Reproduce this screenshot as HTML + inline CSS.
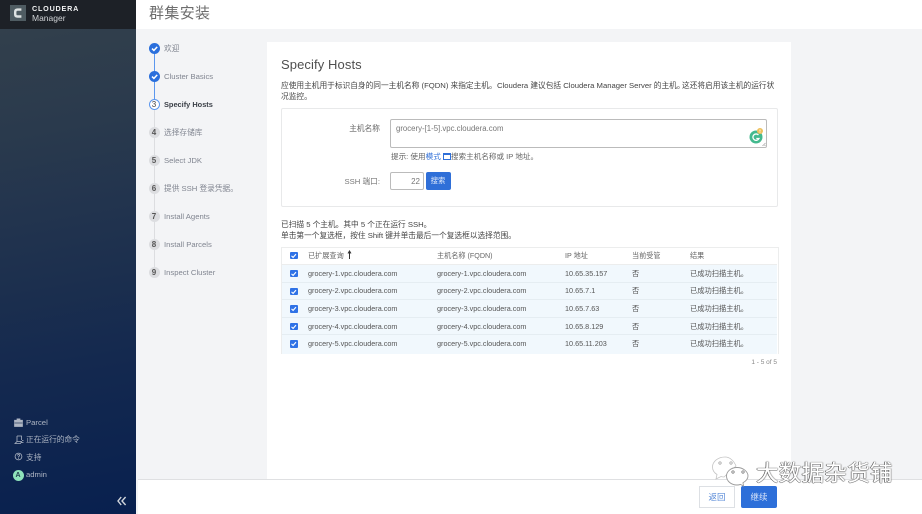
<!DOCTYPE html>
<html lang="zh"><head><meta charset="utf-8"><title>群集安装</title>
<style>
html,body{margin:0;padding:0;width:922px;height:514px;overflow:hidden;background:#f3f4f6}
body{font-family:"Liberation Sans","Noto Sans CJK SC",sans-serif;font-size:7.7px;color:#555;position:relative}
#w{position:absolute;left:0;top:0;width:922px;height:514px;filter:blur(.25px)}
.a,.t{position:absolute;white-space:nowrap}
.t{line-height:12px;height:12px}
.c{position:absolute;left:148.5px;width:11px;height:11px;border-radius:50%;background:#dcdde0;color:#555;font-size:8px;font-weight:bold;line-height:11px;text-align:center}
.s{left:164px;color:#808590;font-size:7.7px}
.side{left:26px;color:#aeb6c4;font-size:7.7px}
.row{position:absolute;left:282px;width:495px;background:#f1f8fd;border-bottom:1px solid #e5edf2;box-sizing:border-box}
.cb{position:absolute;left:290px;width:7.5px;height:7.5px;background:#2f72e6;border-radius:1px}
.cb svg{position:absolute;left:0;top:0}
.g{color:#555;font-size:7.25px}
.h{color:#666;font-size:7.15px}
</style></head><body><div id="w">

<div class="a" style="left:0;top:0;width:136px;height:514px;background:linear-gradient(170deg,#34414c 0%,#2a3a4d 25%,#14294f 70%,#08204f 100%)"></div>
<div class="a" style="left:0;top:0;width:136px;height:29px;background:#1d2127"></div>
<div class="a" style="left:10px;top:5px;width:16px;height:16px;background:#4f5c62"></div>
<svg class="a" style="left:10px;top:5px" width="16" height="16"><path d="M11.4 4.600H7.600Q5.200 4.600 5.200 7V9.200Q5.200 11.500 7.600 11.500H11.400" fill="none" stroke="#dfe3e3" stroke-width="2.400"/></svg>
<span class="t" style="left:32px;top:3px;color:#f1f2f3;font-weight:bold;font-size:7.200px;letter-spacing:.8px">CLOUDERA</span>
<span class="t" style="left:32px;top:12px;color:#d0d3d6;font-size:8.500px">Manager</span>

<svg class="a" style="left:14px;top:418px" width="9" height="9"><path d="M3 2V.8H6V2M.5 2.200H8.500V8.500H.5Z M.5 5H8.500" fill="#aeb6c4" stroke="#aeb6c4" stroke-width=".7"/><path d="M.5 5H8.500" stroke="#23375a" stroke-width=".7"/></svg>
<span class="t side" style="top:416.500px">Parcel</span>
<svg class="a" style="left:14px;top:435px" width="10" height="10" fill="none" stroke="#aeb6c4" stroke-width=".8"><path d="M3 1H7.500V5M3 1V6.500L1 8.500H6.500L7.500 6.500H3M7 7.500H9.500M8 5.500H9.500"/></svg>
<span class="t side" style="top:433.500px">正在运行的命令</span>
<svg class="a" style="left:14px;top:452px" width="9" height="9" fill="none" stroke="#aeb6c4" stroke-width=".8"><circle cx="4.500" cy="4.500" r="3.400"/><path d="M3.300 3.500Q3.500 2.500 4.600 2.500Q5.800 2.600 5.600 3.600Q5.200 4.400 4.500 4.800V5.500M4.500 6V6.800"/></svg>
<span class="t side" style="top:451.500px">支持</span>
<div class="a" style="left:12.500px;top:469.500px;width:11px;height:11px;border-radius:50%;background:#8fe3bb;color:#23404f;font-size:7px;font-weight:bold;line-height:11px;text-align:center">A</div>
<span class="t side" style="top:468.500px">admin</span>
<svg class="a" style="left:117px;top:496px" width="10" height="10" fill="none" stroke="#d2d6dc" stroke-width="1.400"><path d="M4.200 1 1 5 4.200 9M8.600 1 5 5 8.600 9"/></svg>

<div class="a" style="left:136px;top:0;width:786px;height:29px;background:#fff"></div>
<span class="t" style="left:149px;top:1.500px;font-size:15px;line-height:24px;height:24px;color:#6e6e6e;letter-spacing:.35px">群集安装</span>

<div class="a" style="left:154px;top:52px;width:1px;height:50px;background:#5b97ee"></div>
<div class="a" style="left:154px;top:108px;width:1px;height:160px;background:#dcdde0"></div>

<div class="c" style="top:42.500px;background:#2a6fdc"></div>
<svg class="a" style="left:148.500px;top:42.500px" width="11" height="11"><path d="M3 5.600 4.900 7.400 8.200 3.900" fill="none" stroke="#fff" stroke-width="1.500"/></svg>
<span class="t s" style="top:42.500px">欢迎</span>
<div class="c" style="top:70.500px;background:#2a6fdc"></div>
<svg class="a" style="left:148.500px;top:70.500px" width="11" height="11"><path d="M3 5.600 4.900 7.400 8.200 3.900" fill="none" stroke="#fff" stroke-width="1.500"/></svg>
<span class="t s" style="top:70.500px">Cluster Basics</span>
<div class="c" style="top:98.500px;box-sizing:border-box;background:#fff;border:1px solid #5b97ee;line-height:9px;font-weight:normal;color:#444">3</div>
<span class="t s" style="top:98.500px;color:#3a3f47;font-weight:bold;font-size:7.400px">Specify Hosts</span>
<div class="c" style="top:126.500px">4</div><span class="t s" style="top:126.500px">选择存储库</span>
<div class="c" style="top:154.500px">5</div><span class="t s" style="top:154.500px">Select JDK</span>
<div class="c" style="top:182.500px">6</div><span class="t s" style="top:182.500px">提供 SSH 登录凭据。</span>
<div class="c" style="top:210.500px">7</div><span class="t s" style="top:210.500px">Install Agents</span>
<div class="c" style="top:238.500px">8</div><span class="t s" style="top:238.500px">Install Parcels</span>
<div class="c" style="top:266.500px">9</div><span class="t s" style="top:266.500px">Inspect Cluster</span>

<div class="a" style="left:267px;top:42px;width:524px;height:437px;background:#fff"></div>
<span class="t" style="left:281px;top:56px;font-size:13px;line-height:18px;height:18px;color:#4f4f4f;letter-spacing:.1px">Specify Hosts</span>
<span class="t" style="left:281px;top:79.500px;color:#444">应使用主机用于标识自身的同一主机名称 (FQDN) 来指定主机。</span>
<span class="t" style="left:497px;top:79.500px;color:#444">Cloudera 建议包括 Cloudera Manager Server 的主机。</span>
<span class="t" style="left:682px;top:79.500px;color:#444">这还将启用该主机的运行状</span>
<span class="t" style="left:281px;top:91px;color:#444">况监控。</span>

<div class="a" style="left:281px;top:108px;width:495px;height:97px;border:1px solid #e8e9ea;border-radius:2px"></div>
<span class="t" style="left:340px;width:40px;text-align:right;top:122.500px;color:#666">主机名称</span>
<div class="a" style="left:390px;top:119px;width:375px;height:27px;border:1px solid #bbb;border-radius:2px;background:#fff"></div>
<span class="t" style="left:396px;top:122.500px;color:#777;font-size:7.800px">grocery-[1-5].vpc.cloudera.com</span>
<svg class="a" style="left:748px;top:126px" width="18" height="20"><circle cx="8" cy="11" r="6.500" fill="#43b98e"/><path d="M10.500 9A3.200 3.200 0 1 0 11 12.500H8.300" fill="none" stroke="#fff" stroke-width="1.300"/><circle cx="12" cy="5" r="3" fill="#edc05c"/><path d="M12 3.500V5.500M12 6V6.600" stroke="#fff" stroke-width=".8"/><path d="M17.500 17 14 20.500M17.500 19 16 20.500" stroke="#999" stroke-width=".6"/></svg>
<span class="t" style="left:391px;top:151px;color:#666;font-size:7.600px">提示: 使用<span style="color:#2f6fd8">模式</span> <span style="display:inline-block;width:6px;height:4px;border:1px solid #2f6fd8;border-top-width:2px;vertical-align:-1px"></span>搜索主机名称或 IP 地址。</span>
<span class="t" style="left:330px;width:50px;text-align:right;top:175.500px;color:#777">SSH 端口:</span>
<div class="a" style="left:390px;top:172px;width:32px;height:16px;border:1px solid #bbb;border-radius:2px;text-align:right;line-height:17px;color:#777;font-size:8px"><span style="padding-right:3px">22</span></div>
<div class="a" style="left:425.500px;top:172px;width:25px;height:18px;background:#2f6fd8;border-radius:2px;color:#dfe9fa;text-align:center;line-height:18px;font-size:7.400px">搜索</div>

<span class="t" style="left:281px;top:218.500px;color:#444">已扫描 5 个主机。其中 5 个正在运行 SSH。</span>
<span class="t" style="left:281px;top:229.500px;color:#444">单击第一个复选框，按住 Shift 键并单击最后一个复选框以选择范围。</span>

<div class="a" style="left:281px;top:247px;width:496px;height:106px;border:1px solid #eceded;border-bottom:0"></div>
<div class="a" style="left:282px;top:264px;width:495px;height:1px;background:#eceded"></div>
<div class="cb" style="top:251.500px"><svg width="7.500" height="7.500"><path d="M1.500 3.900 3.100 5.400 6 2.100" fill="none" stroke="#fff" stroke-width="1.100"/></svg></div>
<span class="t h" style="left:308px;top:249.500px">已扩展查询</span>
<svg class="a" style="left:346.500px;top:250px" width="5" height="10"><path d="M2.500 9V1.500M1 3.500 2.500 1 4 3.500" fill="none" stroke="#333" stroke-width="1"/></svg>
<span class="t h" style="left:437px;top:249.500px">主机名称 (FQDN)</span>
<span class="t h" style="left:565px;top:249.500px">IP 地址</span>
<span class="t h" style="left:632px;top:249.500px">当前受管</span>
<span class="t h" style="left:690px;top:249.500px">结果</span>

<div class="row" style="top:265px;height:18px"></div>
<div class="cb" style="top:269.500px"><svg width="7.500" height="7.500"><path d="M1.500 3.900 3.100 5.400 6 2.100" fill="none" stroke="#fff" stroke-width="1.100"/></svg></div>
<span class="t g" style="left:308px;top:267.500px">grocery-1.vpc.cloudera.com</span><span class="t g" style="left:437px;top:267.500px">grocery-1.vpc.cloudera.com</span><span class="t g" style="left:565px;top:267.500px">10.65.35.157</span><span class="t g" style="left:632px;top:267.500px">否</span><span class="t g" style="left:690px;top:267.500px">已成功扫描主机。</span>

<div class="row" style="top:283px;height:17px"></div>
<div class="cb" style="top:287.500px"><svg width="7.500" height="7.500"><path d="M1.500 3.900 3.100 5.400 6 2.100" fill="none" stroke="#fff" stroke-width="1.100"/></svg></div>
<span class="t g" style="left:308px;top:285px">grocery-2.vpc.cloudera.com</span><span class="t g" style="left:437px;top:285px">grocery-2.vpc.cloudera.com</span><span class="t g" style="left:565px;top:285px">10.65.7.1</span><span class="t g" style="left:632px;top:285px">否</span><span class="t g" style="left:690px;top:285px">已成功扫描主机。</span>

<div class="row" style="top:300px;height:18px"></div>
<div class="cb" style="top:305px"><svg width="7.500" height="7.500"><path d="M1.500 3.900 3.100 5.400 6 2.100" fill="none" stroke="#fff" stroke-width="1.100"/></svg></div>
<span class="t g" style="left:308px;top:303px">grocery-3.vpc.cloudera.com</span><span class="t g" style="left:437px;top:303px">grocery-3.vpc.cloudera.com</span><span class="t g" style="left:565px;top:303px">10.65.7.63</span><span class="t g" style="left:632px;top:303px">否</span><span class="t g" style="left:690px;top:303px">已成功扫描主机。</span>

<div class="row" style="top:318px;height:17px"></div>
<div class="cb" style="top:322.500px"><svg width="7.500" height="7.500"><path d="M1.500 3.900 3.100 5.400 6 2.100" fill="none" stroke="#fff" stroke-width="1.100"/></svg></div>
<span class="t g" style="left:308px;top:320.500px">grocery-4.vpc.cloudera.com</span><span class="t g" style="left:437px;top:320.500px">grocery-4.vpc.cloudera.com</span><span class="t g" style="left:565px;top:320.500px">10.65.8.129</span><span class="t g" style="left:632px;top:320.500px">否</span><span class="t g" style="left:690px;top:320.500px">已成功扫描主机。</span>

<div class="row" style="top:335px;height:18.500px;border-bottom:0"></div>
<div class="cb" style="top:340px"><svg width="7.500" height="7.500"><path d="M1.500 3.900 3.100 5.400 6 2.100" fill="none" stroke="#fff" stroke-width="1.100"/></svg></div>
<span class="t g" style="left:308px;top:338px">grocery-5.vpc.cloudera.com</span><span class="t g" style="left:437px;top:338px">grocery-5.vpc.cloudera.com</span><span class="t g" style="left:565px;top:338px">10.65.11.203</span><span class="t g" style="left:632px;top:338px">否</span><span class="t g" style="left:690px;top:338px">已成功扫描主机。</span>

<span class="t" style="left:727px;width:50px;text-align:right;top:356.500px;font-size:6.500px;color:#888">1 - 5 of 5</span>

<div class="a" style="left:138px;top:479px;width:784px;height:35px;background:#fff;border-top:1px solid #dfe0e2;box-sizing:border-box"></div>
<div class="a" style="left:699px;top:486px;width:36px;height:21.500px;box-sizing:border-box;border:1px solid #dde0e4;color:#5a8bd8;text-align:center;line-height:20px;background:#fff;font-size:8.500px">返回</div>
<div class="a" style="left:741px;top:486px;width:36px;height:21.500px;background:#2d6fd9;border-radius:2px;color:#dbe7fa;text-align:center;line-height:22px;font-size:8.500px">继续</div>

<svg class="a" style="left:710px;top:454px" width="40" height="36"><path d="M15 3C8 3 2.500 7.500 2.500 13C2.500 16.500 4.500 19 7 20.500L6 25L11 22.500C12 22.800 13 23 14 23L26 12C24 7 20 3 15 3Z" fill="#fff" stroke="#c4c4c4" stroke-width=".8"/><path d="M27 13.500C21 13.500 16.500 17.500 16.500 22C16.500 27 21 31 27 31C28.300 31 29.400 30.800 30.400 30.400L33.500 32L33 28.800C36 27 38 24.800 38 22C38 17.500 33 13.500 27 13.500Z" fill="#fff" stroke="#9a9a9a" stroke-width=".9"/><circle cx="10" cy="9" r="1.200" fill="none" stroke="#999" stroke-width=".7"/><circle cx="21" cy="9" r="1.200" fill="none" stroke="#999" stroke-width=".7"/><circle cx="23" cy="18" r="1.200" fill="none" stroke="#666" stroke-width=".7"/><circle cx="33" cy="18" r="1.200" fill="none" stroke="#666" stroke-width=".7"/></svg>
<span class="t" style="left:756px;top:460px;height:28px;line-height:28px;font-size:22.600px;color:#fff;letter-spacing:.2px;text-shadow:-.7px 0 0 #555,0 .7px 0 #666,.7px 0 1px #999,0 -.7px 1px #bbb">大数据杂货铺</span>
</div></body></html>
